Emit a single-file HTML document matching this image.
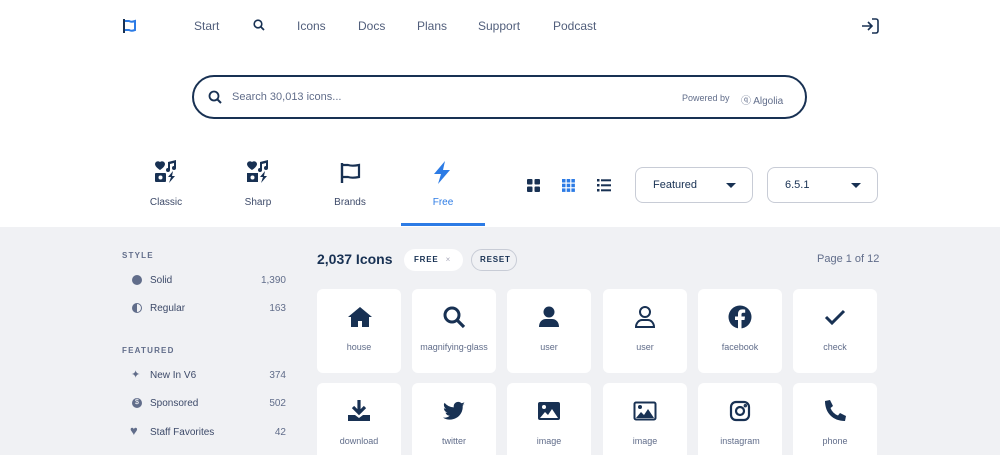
<!DOCTYPE html>
<html><head><meta charset="utf-8"><style>
*{box-sizing:border-box;margin:0;padding:0}
body{width:1000px;height:455px;overflow:hidden;font-family:"Liberation Sans",sans-serif;background:#fff;color:#183153;position:relative}
.a{position:absolute}
.nav{font-size:12px;color:#515e7b;top:19px}
.gray{position:absolute;left:0;top:227px;width:1000px;height:228px;background:#f0f1f4}
.card{position:absolute;width:84px;height:84px;background:#fff;border-radius:6px}
.card svg{position:absolute;left:30px;top:16px}
.card span{position:absolute;left:0;right:0;top:53px;text-align:center;font-size:9px;color:#616d8a}
.side{font-size:10px;color:#3d4a69}
.cnt{font-size:10px;color:#616d8a;text-align:right;width:40px}
.hd{font-size:8px;letter-spacing:1.2px;color:#616d8a;font-weight:bold}
.tab{font-size:10px;color:#3d4a69;text-align:center;width:80px}
.dd{position:absolute;top:167px;height:36px;border:1.5px solid #c8ccd6;border-radius:8px;font-size:11px;color:#183153;padding:11px 0 0 17px}
.dd:after{content:"";position:absolute;right:16px;top:15px;border-left:5px solid transparent;border-right:5px solid transparent;border-top:5px solid #183153}
</style></head><body>
<svg class="a" style="left:122px;top:18px" width="16" height="16" viewBox="0 0 16 16"><path d="M2 1v14" stroke="#183153" stroke-width="2"/><path d="M3 3h4c2 1 3 1 6 0v9c-3 1-4 1-6 0H3" fill="none" stroke="#2c7be5" stroke-width="2"/></svg>
<div class="a nav" style="left:194px">Start</div>
<svg class="a" style="left:253px;top:19px" width="12" height="12" viewBox="0 0 12 12"><circle cx="5" cy="5" r="3.8" fill="none" stroke="#183153" stroke-width="1.6"/><path d="M8 8l3 3" stroke="#183153" stroke-width="1.8"/></svg>
<div class="a nav" style="left:297px">Icons</div>
<div class="a nav" style="left:358px">Docs</div>
<div class="a nav" style="left:417px">Plans</div>
<div class="a nav" style="left:478px">Support</div>
<div class="a nav" style="left:553px">Podcast</div>
<svg class="a" style="left:861px;top:18px" width="18" height="16" viewBox="0 0 18 16"><path d="M11 1h4a2 2 0 0 1 2 2v10a2 2 0 0 1-2 2h-4" fill="none" stroke="#183153" stroke-width="1.6"/><path d="M1 8h9M7 4l4 4-4 4" fill="none" stroke="#183153" stroke-width="1.6"/></svg>

<div class="a" style="left:192px;top:75px;width:615px;height:44px;border:2px solid #183153;border-radius:22px"></div>
<svg class="a" style="left:208px;top:90px" width="14" height="14" viewBox="0 0 14 14"><circle cx="6" cy="6" r="4.5" fill="none" stroke="#183153" stroke-width="1.8"/><path d="M9.5 9.5l3.5 3.5" stroke="#183153" stroke-width="2"/></svg>
<div class="a" style="left:232px;top:91px;font-size:11px;color:#616d8a">Search 30,013 icons...</div>
<div class="a" style="left:682px;top:93px;font-size:9px;color:#616d8a">Powered by</div>
<div class="a" style="left:741px;top:92px;font-size:10px;color:#616d8a">ⓠ Algolia</div>

<svg class="a" style="left:154px;top:160px" width="24" height="24" viewBox="0 0 24 24"><path d="M1 4a3 3 0 0 1 5-2 3 3 0 0 1 5 2c0 3-5 6-5 6S1 7 1 4z" fill="#183153"/><path d="M14 2l8-2v8a2 2 0 1 1-2-2V3l-4 1v6a2 2 0 1 1-2-2z" fill="#183153"/><rect x="1" y="13" width="11" height="9" rx="1" fill="#183153"/><circle cx="6.5" cy="17.5" r="2" fill="#fff"/><path d="M19 11l-5 6h3l-2 6 6-7h-3z" fill="#183153"/></svg>
<div class="a tab" style="left:126px;top:197px">Classic</div>
<svg class="a" style="left:246px;top:160px" width="24" height="24" viewBox="0 0 24 24"><path d="M1 4a3 3 0 0 1 5-2 3 3 0 0 1 5 2c0 3-5 6-5 6S1 7 1 4z" fill="#183153"/><path d="M14 2l8-2v8a2 2 0 1 1-2-2V3l-4 1v6a2 2 0 1 1-2-2z" fill="#183153"/><rect x="1" y="13" width="11" height="9" fill="#183153"/><circle cx="6.5" cy="17.5" r="2" fill="#fff"/><path d="M19 11l-5 6h3l-2 6 6-7h-3z" fill="#183153"/></svg>
<div class="a tab" style="left:218px;top:197px">Sharp</div>
<svg class="a" style="left:340px;top:162px" width="22" height="22" viewBox="0 0 22 22"><path d="M2 1v20" stroke="#183153" stroke-width="2.4"/><path d="M3 3h5c3 1 6 1 11 0v12c-5 1-8 1-11 0H3" fill="none" stroke="#183153" stroke-width="2.2"/></svg>
<div class="a tab" style="left:310px;top:197px">Brands</div>
<svg class="a" style="left:433px;top:161px" width="18" height="23" viewBox="0 0 18 23"><path d="M12 0L1 13h7l-3 10L17 9h-7z" fill="#2c7be5"/></svg>
<div class="a tab" style="left:403px;top:197px;color:#2c7be5">Free</div>
<div class="a" style="left:401px;top:223px;width:84px;height:3px;background:#2c7be5"></div>

<svg class="a" style="left:527px;top:179px" width="13" height="13" viewBox="0 0 13 13" fill="#183153"><rect width="5.5" height="5.5" rx="1"/><rect x="7.5" width="5.5" height="5.5" rx="1"/><rect y="7.5" width="5.5" height="5.5" rx="1"/><rect x="7.5" y="7.5" width="5.5" height="5.5" rx="1"/></svg>
<svg class="a" style="left:562px;top:179px" width="13" height="13" viewBox="0 0 13 13" fill="#2c7be5"><rect width="3.5" height="3.5"/><rect x="4.7" width="3.5" height="3.5"/><rect x="9.4" width="3.5" height="3.5"/><rect y="4.7" width="3.5" height="3.5"/><rect x="4.7" y="4.7" width="3.5" height="3.5"/><rect x="9.4" y="4.7" width="3.5" height="3.5"/><rect y="9.4" width="3.5" height="3.5"/><rect x="4.7" y="9.4" width="3.5" height="3.5"/><rect x="9.4" y="9.4" width="3.5" height="3.5"/></svg>
<svg class="a" style="left:597px;top:179px" width="14" height="13" viewBox="0 0 14 13" fill="#183153"><rect width="2.5" height="2.5"/><rect x="4" y=".3" width="10" height="2"/><rect y="5" width="2.5" height="2.5"/><rect x="4" y="5.3" width="10" height="2"/><rect y="10" width="2.5" height="2.5"/><rect x="4" y="10.3" width="10" height="2"/></svg>
<div class="dd" style="left:635px;width:118px">Featured</div>
<div class="dd" style="left:767px;width:111px">6.5.1</div>

<div class="gray"></div>
<div class="a hd" style="left:122px;top:251px">STYLE</div>
<div class="a" style="left:132px;top:275px;width:10px;height:10px;border-radius:50%;background:#616d8a"></div>
<div class="a side" style="left:150px;top:275px">Solid</div><div class="a cnt" style="left:246px;top:275px">1,390</div>
<div class="a" style="left:132px;top:303px;width:10px;height:10px;border-radius:50%;border:1.5px solid #616d8a;background:linear-gradient(90deg,#616d8a 50%,transparent 50%)"></div>
<div class="a side" style="left:150px;top:303px">Regular</div><div class="a cnt" style="left:246px;top:303px">163</div>
<div class="a hd" style="left:122px;top:346px">FEATURED</div>
<div class="a" style="left:131px;top:368px;font-size:11px;color:#616d8a">✦</div>
<div class="a side" style="left:150px;top:370px">New In V6</div><div class="a cnt" style="left:246px;top:370px">374</div>
<div class="a" style="left:132px;top:398px;width:10px;height:10px;border-radius:50%;background:#616d8a;color:#fff;font-size:7px;text-align:center;line-height:10px">$</div>
<div class="a side" style="left:150px;top:398px">Sponsored</div><div class="a cnt" style="left:246px;top:398px">502</div>
<div class="a" style="left:130px;top:424px;font-size:13px;color:#616d8a;line-height:13px">♥</div>
<div class="a side" style="left:150px;top:427px">Staff Favorites</div><div class="a cnt" style="left:246px;top:427px">42</div>

<div class="a" style="left:317px;top:251px;font-size:14px;font-weight:bold">2,037 Icons</div>
<div class="a" style="left:404px;top:249px;width:59px;height:22px;background:#fff;border-radius:11px;font-size:8px;font-weight:bold;padding:6px 0 0 10px;letter-spacing:.8px">FREE <span style="color:#aab;font-weight:normal;margin-left:4px">×</span></div>
<div class="a" style="left:471px;top:249px;width:46px;height:22px;border:1.5px solid #c8ccd6;border-radius:11px;font-size:8px;font-weight:bold;padding:5px 0 0 8px;letter-spacing:.8px">RESET</div>
<div class="a" style="left:817px;top:253px;font-size:11px;color:#616d8a">Page 1 of 12</div>

<div class="card" style="left:317px;top:289px"><svg width="26" height="24" viewBox="0 0 26 24"><path d="M13 2L1 12h3v10h7v-6h4v6h7V12h3z" fill="#183153"/></svg><span>house</span></div>
<div class="card" style="left:412px;top:289px"><svg width="24" height="24" viewBox="0 0 24 24"><circle cx="10" cy="10" r="7" fill="none" stroke="#183153" stroke-width="3"/><path d="M15 15l7 7" stroke="#183153" stroke-width="3.2"/></svg><span>magnifying-glass</span></div>
<div class="card" style="left:507px;top:289px"><svg width="24" height="24" viewBox="0 0 24 24"><circle cx="12" cy="7" r="5.5" fill="#183153"/><path d="M2 22c0-5 3-8 7-8h6c4 0 7 3 7 8z" fill="#183153"/></svg><span>user</span></div>
<div class="card" style="left:603px;top:289px"><svg width="24" height="24" viewBox="0 0 24 24" fill="none" stroke="#183153" stroke-width="2"><circle cx="12" cy="7" r="5"/><path d="M3 22c0-4 3-7 6-7h6c3 0 6 3 6 7z"/></svg><span>user</span></div>
<div class="card" style="left:698px;top:289px"><svg width="24" height="24" viewBox="0 0 24 24"><circle cx="12" cy="12" r="11.5" fill="#183153"/><path d="M13.5 24V15h3l.5-3.5h-3.5V9.5c0-1 .4-1.8 2-1.8h1.7V4.6c-.5-.1-1.6-.2-2.8-.2-2.7 0-4.4 1.6-4.4 4.6v2.5H7V15h3v9z" fill="#fff"/></svg><span>facebook</span></div>
<div class="card" style="left:793px;top:289px"><svg width="24" height="24" viewBox="0 0 24 24"><path d="M3 12l6 6L21 6" fill="none" stroke="#183153" stroke-width="3"/></svg><span>check</span></div>

<div class="card" style="left:317px;top:383px"><svg width="24" height="24" viewBox="0 0 24 24"><path d="M12 1v12M6 8l6 6 6-6" fill="none" stroke="#183153" stroke-width="3.2"/><path d="M1 16h7l4 3 4-3h7v6H1z" fill="#183153"/></svg><span>download</span></div>
<div class="card" style="left:412px;top:383px"><svg width="24" height="24" viewBox="0 0 24 24"><path d="M23 5c-.8.4-1.7.6-2.6.7.9-.6 1.6-1.4 2-2.5-.9.5-1.9.9-2.9 1.1A4.5 4.5 0 0 0 11.8 8.4 12.8 12.8 0 0 1 2.5 3.7a4.5 4.5 0 0 0 1.4 6c-.7 0-1.4-.2-2-.6 0 2.2 1.6 4 3.6 4.4-.7.2-1.4.2-2 .1.6 1.800 2.2 3.1 4.2 3.1A9 9 0 0 1 1 18.6 12.8 12.8 0 0 0 20.7 7.2V6.6c.9-.6 1.6-1.4 2.3-1.6z" fill="#183153"/></svg><span>twitter</span></div>
<div class="card" style="left:507px;top:383px"><svg width="24" height="24" viewBox="0 0 24 24"><rect x="1" y="3" width="22" height="18" rx="2" fill="#183153"/><circle cx="7" cy="8" r="2" fill="#fff"/><path d="M3 19l5-6 3 3 4-6 6 9z" fill="#fff"/></svg><span>image</span></div>
<div class="card" style="left:603px;top:383px"><svg width="24" height="24" viewBox="0 0 24 24"><rect x="1.5" y="3.5" width="21" height="17" rx="1.5" fill="none" stroke="#183153" stroke-width="2"/><circle cx="7" cy="8" r="2" fill="#183153"/><path d="M3 19l5-6 3 3 4-6 6 9z" fill="#183153"/></svg><span>image</span></div>
<div class="card" style="left:698px;top:383px"><svg width="24" height="24" viewBox="0 0 24 24" fill="none" stroke="#183153" stroke-width="2.2"><rect x="3" y="3" width="18" height="18" rx="5"/><circle cx="12" cy="12" r="4"/><circle cx="17.3" cy="6.7" r=".6" fill="#183153"/></svg><span>instagram</span></div>
<div class="card" style="left:793px;top:383px"><svg width="24" height="24" viewBox="0 0 24 24"><path d="M7 1l3 6-2.5 2a13 13 0 0 0 7.5 7.5l2-2.5 6 3-1 5C10 22 2 14 2 2z" fill="#183153"/></svg><span>phone</span></div>
</body></html>
